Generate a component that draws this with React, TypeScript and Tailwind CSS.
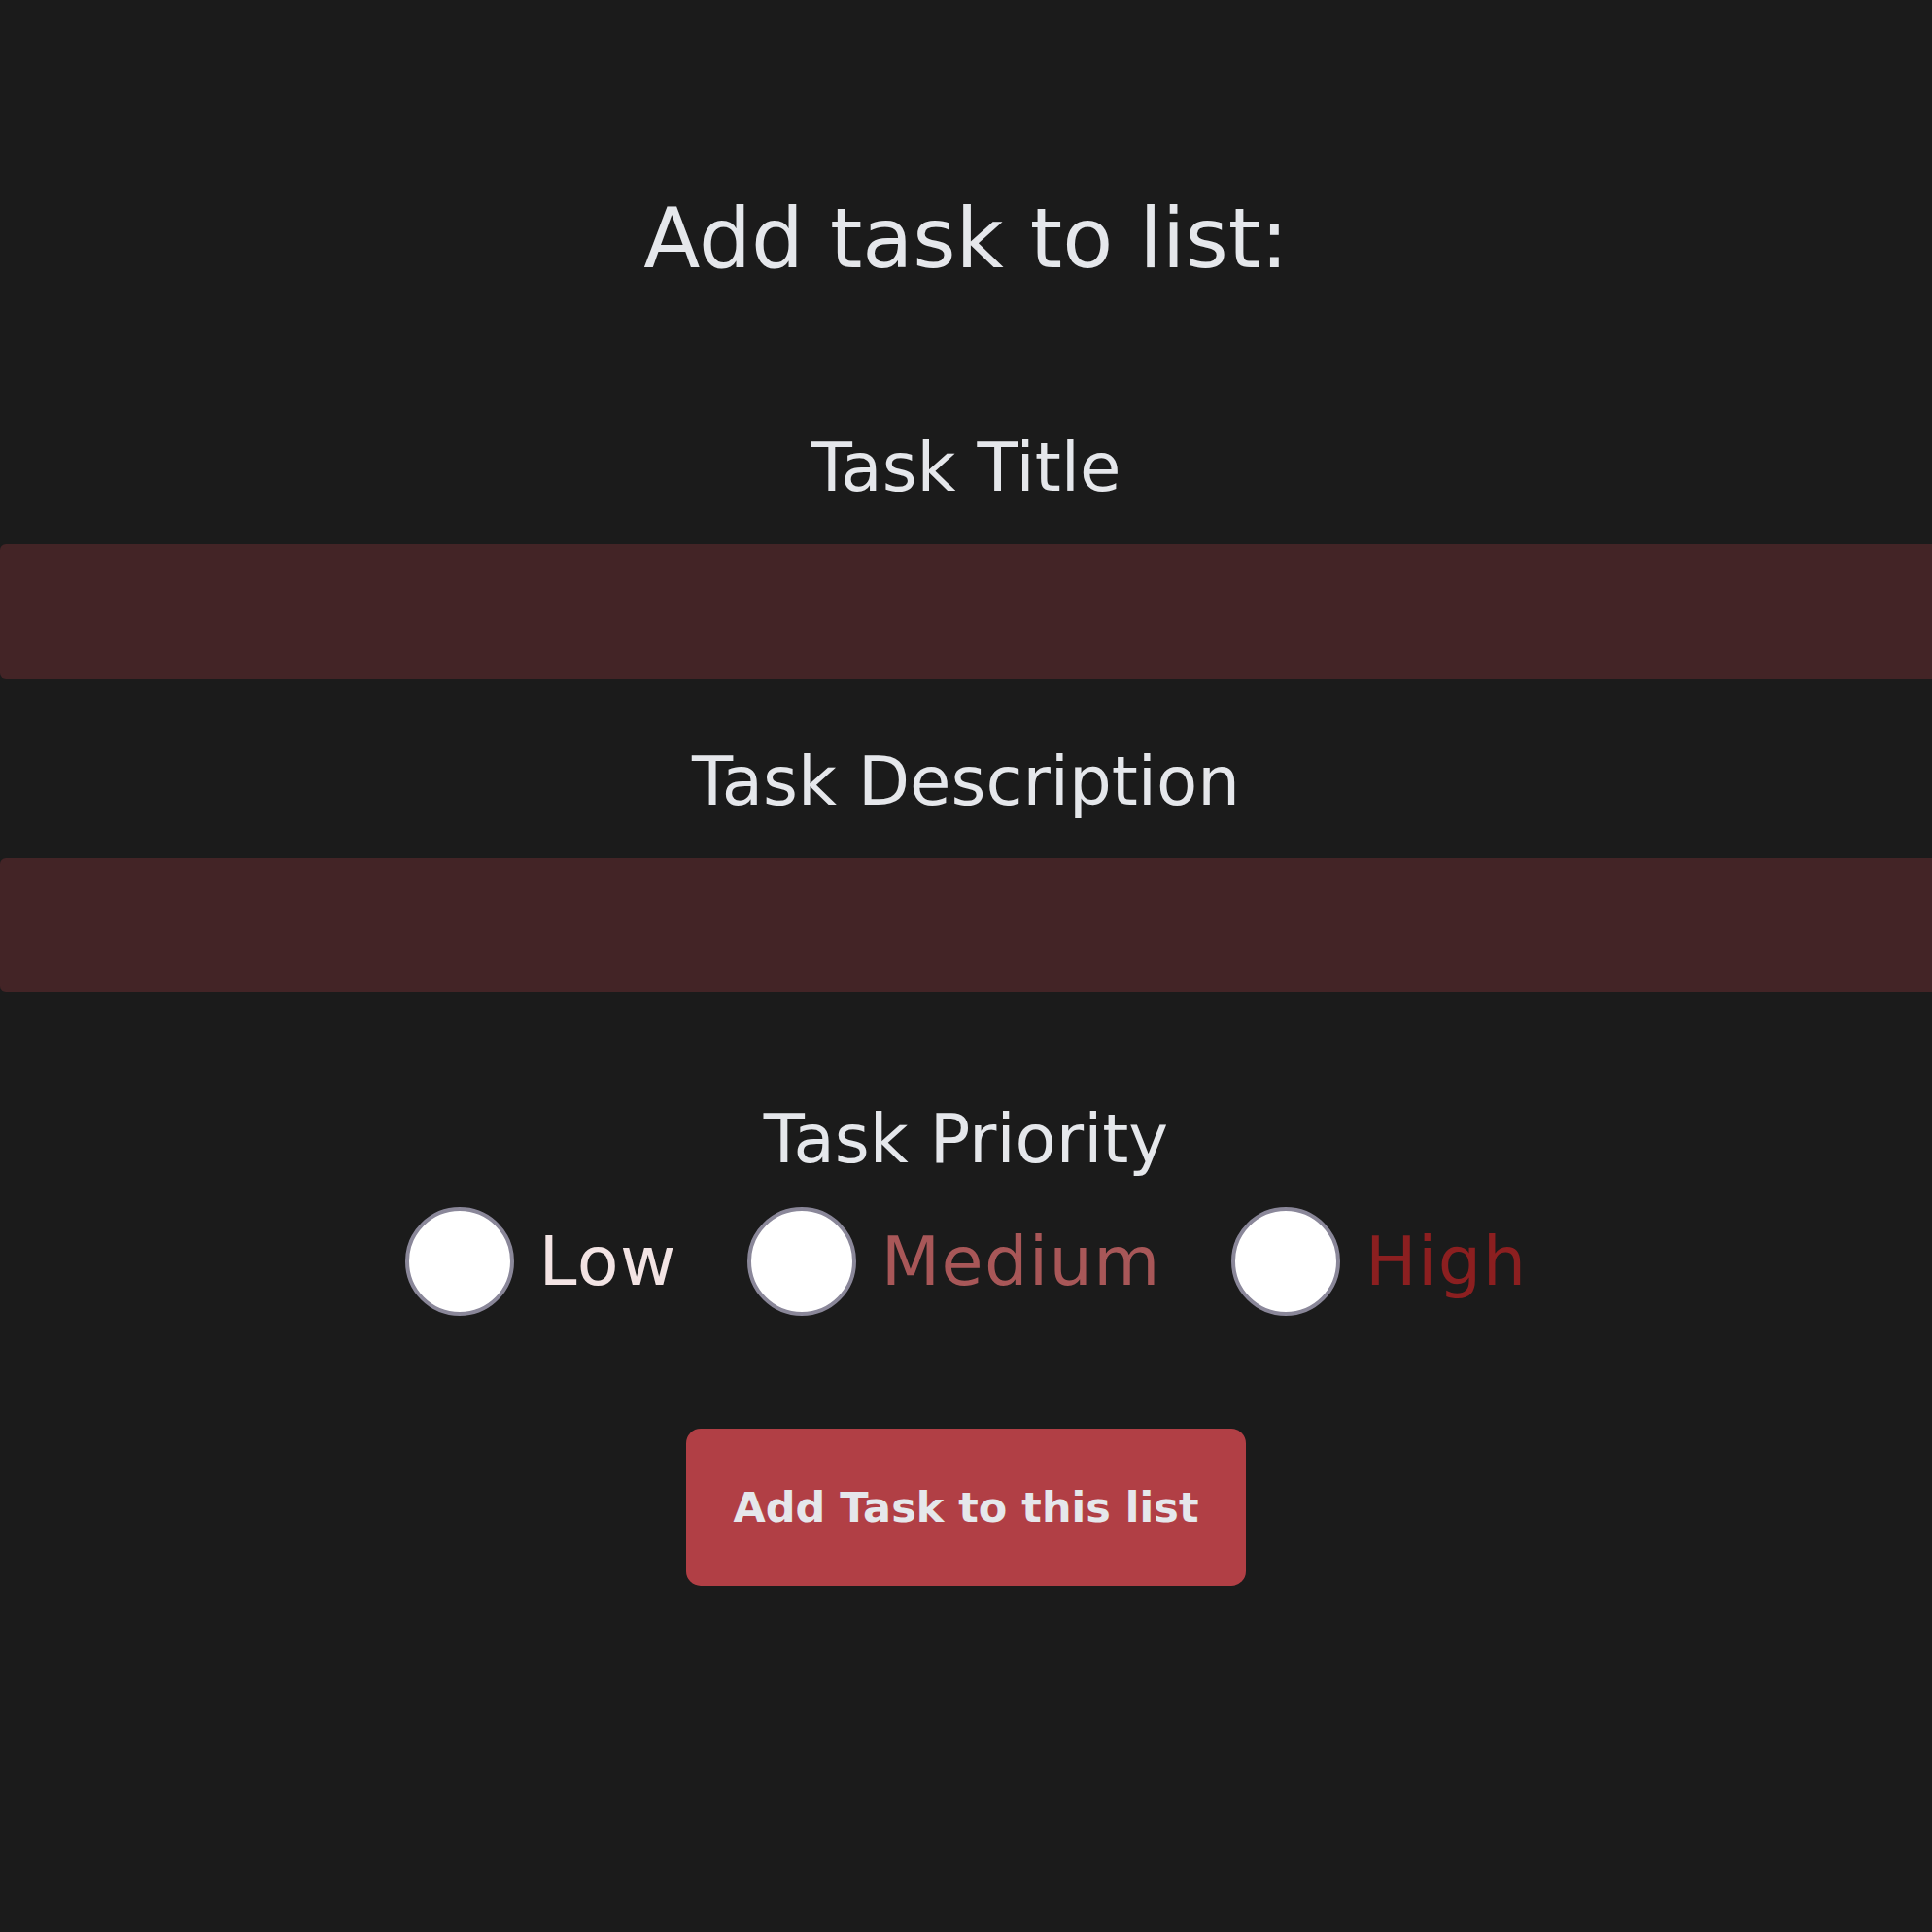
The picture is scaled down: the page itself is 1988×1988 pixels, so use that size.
import React, { useState } from 'react';

type Priority = 'low' | 'medium' | 'high';

const PRIORITIES: { value: Priority; label: string; color: string }[] = [
    { value: 'low', label: 'Low', color: 'text-[#f3e4e4]' },
    { value: 'medium', label: 'Medium', color: 'text-[#a85758]' },
    { value: 'high', label: 'High', color: 'text-[#8c1f20]' },
];

export default function App() {
    const [title, setTitle] = useState('');
    const [description, setDescription] = useState('');
    const [priority, setPriority] = useState<Priority | null>(null);

    return (
        <div
            className="min-h-[1988px] w-full bg-[#1b1b1b] text-[#e5e7eb] flex flex-col items-center overflow-hidden"
            style={{ fontFamily: '"DejaVu Sans", "Noto Sans", sans-serif' }}
        >
            <h1 className="mt-[203px] text-[85px] leading-none font-normal">Add task to list:</h1>

            {/* Title */}
            <label htmlFor="title" className="mt-[159px] text-[69px] leading-none">
                Task Title
            </label>
            <input
                id="title"
                value={title}
                onChange={e => setTitle(e.target.value)}
                className="mt-[44px] h-[139px] w-full bg-[#432426] rounded-l-[6px] outline-none px-6 text-[48px] text-[#e5e7eb]"
            />

            {/* Description */}
            <label htmlFor="description" className="mt-[71px] text-[69px] leading-none">
                Task Description
            </label>
            <input
                id="description"
                value={description}
                onChange={e => setDescription(e.target.value)}
                className="mt-[44px] h-[138px] w-full bg-[#432426] rounded-l-[6px] outline-none px-6 text-[48px] text-[#e5e7eb]"
            />

            {/* Priority */}
            <div className="mt-[117px] text-[69px] leading-none">Task Priority</div>
            <div className="mt-[35px] flex items-center gap-[72px]">
                {PRIORITIES.map(p => (
                    <label key={p.value} className="flex items-center gap-[26px] cursor-pointer">
                        <input
                            type="radio"
                            name="priority"
                            checked={priority === p.value}
                            onChange={() => setPriority(p.value)}
                            className="sr-only"
                        />
                        <span className="w-[112px] h-[112px] rounded-full bg-white border-[4px] border-[#8a8799] flex items-center justify-center">
                            {priority === p.value && <span className="w-[56px] h-[56px] rounded-full bg-[#b13f45]" />}
                        </span>
                        <span className={`text-[70px] leading-none tracking-[0.02em] ${p.color}`}>{p.label}</span>
                    </label>
                ))}
            </div>

            <button className="mt-[116px] w-[576px] h-[162px] rounded-[15px] bg-[#b13f45] text-[#e5e7eb] text-[43px] font-bold">
                Add Task to this list
            </button>
        </div>
    );
}
